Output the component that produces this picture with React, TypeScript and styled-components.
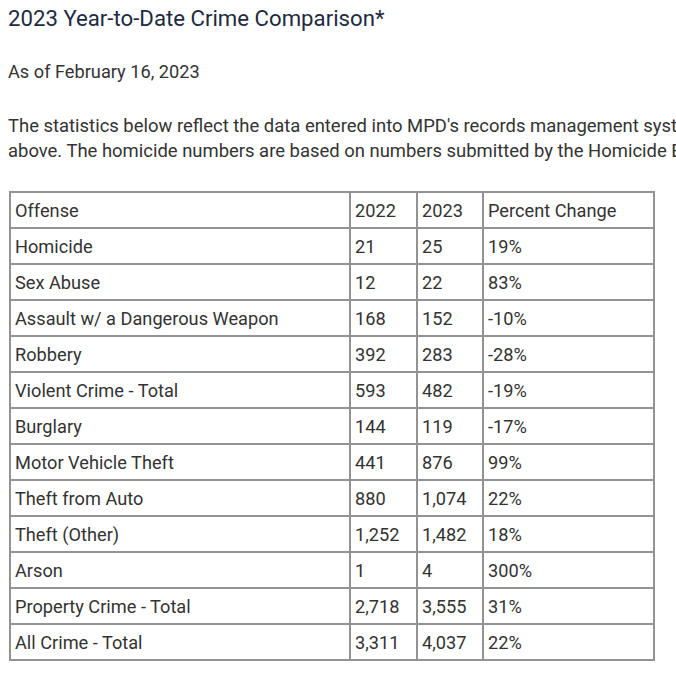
import React from 'react'
import styled, { createGlobalStyle } from 'styled-components'

const GlobalStyle = createGlobalStyle`
  html, body {
    margin: 0;
    padding: 0;
    background: #ffffff;
    overflow: hidden;
  }
  body {
    font-family: Roboto, "Liberation Sans", sans-serif;
    color: #333333;
  }
`

const Page = styled.div`
  width: 676px;
  height: 680px;
  overflow: hidden;
  padding: 5px 0 0 8px;
  box-sizing: border-box;
`

const Title = styled.h2`
  margin: 0;
  font-size: 22.2px;
  font-weight: 400;
  line-height: 27px;
  color: #1c2a43;
  white-space: nowrap;
`

const DateLine = styled.p`
  margin: 28px 0 0;
  font-size: 18.2px;
  line-height: 24px;
  white-space: nowrap;
`

const Intro = styled.p`
  margin: 30px 0 0;
  font-size: 18.45px;
  line-height: 25px;
  white-space: nowrap;
`

const Table = styled.table`
  margin-top: 27px;
  margin-left: 1px;
  border-collapse: collapse;
  border: 2px solid #939393;
  font-size: 18.2px;
`

const Cell = styled.td<{ $w: number }>`
  width: ${p => p.$w}px;
  height: 36px;
  padding: 0 4px;
  border: 2px solid #939393;
  box-sizing: border-box;
  text-align: left;
  vertical-align: middle;
  color: #333333;
  white-space: nowrap;
`

const widths = [340, 67, 66, 171]

const rows: string[][] = [
  ['Offense', '2022', '2023', 'Percent Change'],
  ['Homicide', '21', '25', '19%'],
  ['Sex Abuse', '12', '22', '83%'],
  ['Assault w/ a Dangerous Weapon', '168', '152', '-10%'],
  ['Robbery', '392', '283', '-28%'],
  ['Violent Crime - Total', '593', '482', '-19%'],
  ['Burglary', '144', '119', '-17%'],
  ['Motor Vehicle Theft', '441', '876', '99%'],
  ['Theft from Auto', '880', '1,074', '22%'],
  ['Theft (Other)', '1,252', '1,482', '18%'],
  ['Arson', '1', '4', '300%'],
  ['Property Crime - Total', '2,718', '3,555', '31%'],
  ['All Crime - Total', '3,311', '4,037', '22%'],
]

const App = () => {
  return (
    <>
      <GlobalStyle />
      <Page>
        <Title>2023 Year-to-Date Crime Comparison*</Title>
        <DateLine>As of February 16, 2023</DateLine>
        <Intro>
          The statistics below reflect the data entered into MPD's records management system (RMS) as of the date
          <br />
          above. The homicide numbers are based on numbers submitted by the Homicide Branch.
        </Intro>
        <Table>
          <tbody>
            {rows.map((r, i) => (
              <tr key={i}>
                {r.map((c, j) => (
                  <Cell key={j} $w={widths[j]}>{c}</Cell>
                ))}
              </tr>
            ))}
          </tbody>
        </Table>
      </Page>
    </>
  )
}

export default App
